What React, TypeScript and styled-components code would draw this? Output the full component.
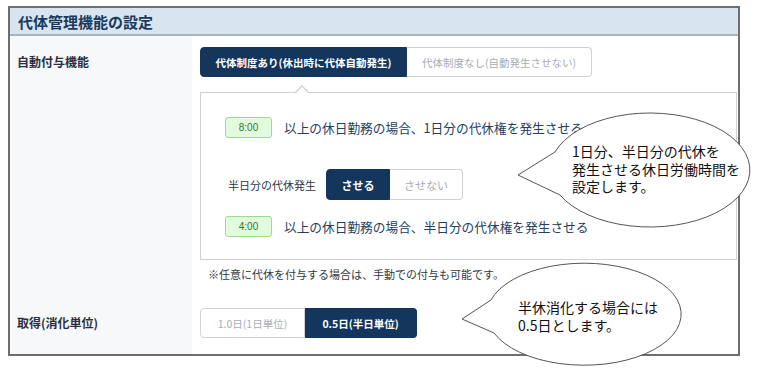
import React, { FC } from 'react';
import styled, { createGlobalStyle, css } from 'styled-components';

const GlobalStyle = createGlobalStyle`
    html, body {
        margin: 0;
        padding: 0;
        background: #ffffff;
    }
    body {
        font-family: "Noto Sans CJK JP", "Noto Sans", sans-serif;
        color: #23405f;
    }
`;

const NAVY = '#14365c';

const App: FC = () => (
    <Page>
        <GlobalStyle />
        <Frame>
            <Header>代体管理機能の設定</Header>
            <Rows>
                <Label $top={11}>自動付与機能</Label>
                <Cell $top={11}>
                    <Segmented>
                        <SegButton $active $width={207} $height={30}>
                            代体制度あり(休出時に代体自動発生)
                        </SegButton>
                        <SegButton $width={185} $height={30}>
                            代体制度なし(自動発生させない)
                        </SegButton>
                    </Segmented>
                    <Panel>
                        <TimeRow>
                            <Badge>8:00</Badge>
                            <RowText>以上の休日勤務の場合、1日分の代休権を発生させる</RowText>
                        </TimeRow>
                        <HalfRow>
                            <SmallLabel>半日分の代休発生</SmallLabel>
                            <Segmented>
                                <SegButton $active $width={64} $height={31} $size={11}>
                                    させる
                                </SegButton>
                                <SegButton $width={73} $height={31} $size={11}>
                                    させない
                                </SegButton>
                            </Segmented>
                        </HalfRow>
                        <TimeRow>
                            <Badge>4:00</Badge>
                            <RowText>以上の休日勤務の場合、半日分の代休権を発生させる</RowText>
                        </TimeRow>
                    </Panel>
                    <Note>※任意に代休を付与する場合は、手動での付与も可能です。</Note>
                </Cell>

                <Label $top={26} $bottom={16}>取得(消化単位)</Label>
                <Cell $top={26} $bottom={16}>
                    <Segmented>
                        <SegButton $width={105} $height={30}>
                            1.0日(1日単位)
                        </SegButton>
                        <SegButton $active $width={112} $height={30}>
                            0.5日(半日単位)
                        </SegButton>
                    </Segmented>
                </Cell>
            </Rows>
        </Frame>

        <Callout $left={510} $top={108} $width={250} $height={125}>
            <svg width="250" height="125" viewBox="0 0 250 125">
                <path
                    d="M 45 44 L 8 67 L 50 87 A 100 57 0 1 0 45 44 Z"
                    fill="#ffffff"
                    stroke="#555555"
                    strokeWidth="1"
                />
            </svg>
            <CalloutText $left={62} $top={35}>
                1日分、半日分の代休を
                <br />
                発生させる休日労働時間を
                <br />
                設定します。
            </CalloutText>
        </Callout>

        <Callout $left={455} $top={258} $width={235} $height={112}>
            <svg width="235" height="112" viewBox="0 0 235 112">
                <path
                    d="M 36 42 L 7 61 L 39 75 A 97 51 0 1 0 36 42 Z"
                    fill="#ffffff"
                    stroke="#555555"
                    strokeWidth="1"
                />
            </svg>
            <CalloutText $left={63} $top={41}>
                半休消化する場合には
                <br />
                0.5日とします。
            </CalloutText>
        </Callout>
    </Page>
);

const Page = styled.div`
    position: relative;
    width: 767px;
    height: 376px;
    overflow: hidden;
    padding-top: 6px;
    box-sizing: border-box;
`;

const Frame = styled.div`
    margin-left: 8px;
    width: 732px;
    box-sizing: border-box;
    border: 2px solid #6e6e6e;
    background: #ffffff;
`;

const Header = styled.div`
    height: 26px;
    display: flex;
    align-items: center;
    padding-left: 8px;
    background: #d8e5ee;
    border-bottom: 2px solid #aab4bd;
    font-size: 15px;
    font-weight: 700;
    color: #1b3a5c;
`;

const Rows = styled.div`
    display: grid;
    grid-template-columns: 182px 1fr;
`;

const Label = styled.div<{ $top: number; $bottom?: number }>`
    background: #f7f8fa;
    padding: ${({ $top }) => $top}px 0 ${({ $bottom }) => $bottom ?? 0}px 7px;
    font-size: 12px;
    font-weight: 700;
    color: #2a2f3d;
    line-height: 30px;
`;

const Cell = styled.div<{ $top: number; $bottom?: number }>`
    padding: ${({ $top }) => $top}px 1px ${({ $bottom }) => $bottom ?? 0}px 8px;
    display: flex;
    flex-direction: column;
    align-items: flex-start;
`;

const Segmented = styled.div`
    display: flex;
`;

const SegButton = styled.div<{
    $active?: boolean;
    $width: number;
    $height: number;
    $size?: number;
}>`
    width: ${({ $width }) => $width}px;
    height: ${({ $height }) => $height}px;
    box-sizing: border-box;
    display: flex;
    align-items: center;
    justify-content: center;
    font-size: ${({ $size }) => $size ?? 10.5}px;
    white-space: nowrap;
    ${({ $active }) =>
        $active
            ? css`
                  background: ${NAVY};
                  color: #ffffff;
                  font-weight: 700;
                  border: 1px solid ${NAVY};
              `
            : css`
                  background: #ffffff;
                  color: #a9adb3;
                  border: 1px solid #cfd2d6;
              `}

    &:first-child {
        border-radius: 4px 0 0 4px;
    }
    &:last-child {
        border-radius: 0 4px 4px 0;
    }
    & + & {
        border-left: none;
    }
`;

const Panel = styled.div`
    position: relative;
    margin-top: 15px;
    align-self: stretch;
    box-sizing: border-box;
    border: 1px solid #cfd2d4;
    padding: 24px 0 22px 24px;
    display: flex;
    flex-direction: column;

    &::before,
    &::after {
        content: '';
        position: absolute;
        left: 94px;
        width: 0;
        height: 0;
        border-left: 7px solid transparent;
        border-right: 7px solid transparent;
    }
    &::before {
        top: -8px;
        border-bottom: 7px solid #cfd2d4;
    }
    &::after {
        top: -6px;
        border-bottom: 7px solid #ffffff;
    }
`;

const TimeRow = styled.div`
    display: flex;
    align-items: center;
    gap: 12px;
`;

const Badge = styled.div`
    width: 47px;
    height: 21px;
    box-sizing: border-box;
    display: flex;
    align-items: center;
    justify-content: center;
    background: #e2fbdf;
    border: 1px solid #98de8c;
    border-radius: 3px;
    color: #2f7a2c;
    font-family: "Liberation Sans", "Noto Sans", sans-serif;
    font-size: 10px;
`;

const RowText = styled.span`
    font-size: 12.7px;
    color: #23405f;
    white-space: nowrap;
`;

const HalfRow = styled.div`
    display: flex;
    align-items: center;
    gap: 10px;
    margin: 31px 0 16px 3px;
`;

const SmallLabel = styled.span`
    font-size: 11px;
    color: #2e3744;
`;

const Note = styled.div`
    margin: 6px 0 0 8px;
    font-size: 11px;
    line-height: 16px;
    color: #333a44;
`;

const Callout = styled.div<{ $left: number; $top: number; $width: number; $height: number }>`
    position: absolute;
    left: ${({ $left }) => $left}px;
    top: ${({ $top }) => $top}px;
    width: ${({ $width }) => $width}px;
    height: ${({ $height }) => $height}px;

    svg {
        position: absolute;
        left: 0;
        top: 0;
        display: block;
    }
`;

const CalloutText = styled.div<{ $left: number; $top: number }>`
    position: absolute;
    left: ${({ $left }) => $left}px;
    top: ${({ $top }) => $top}px;
    font-size: 14px;
    line-height: 17.5px;
    color: #111111;
    white-space: nowrap;
`;

export default App;
